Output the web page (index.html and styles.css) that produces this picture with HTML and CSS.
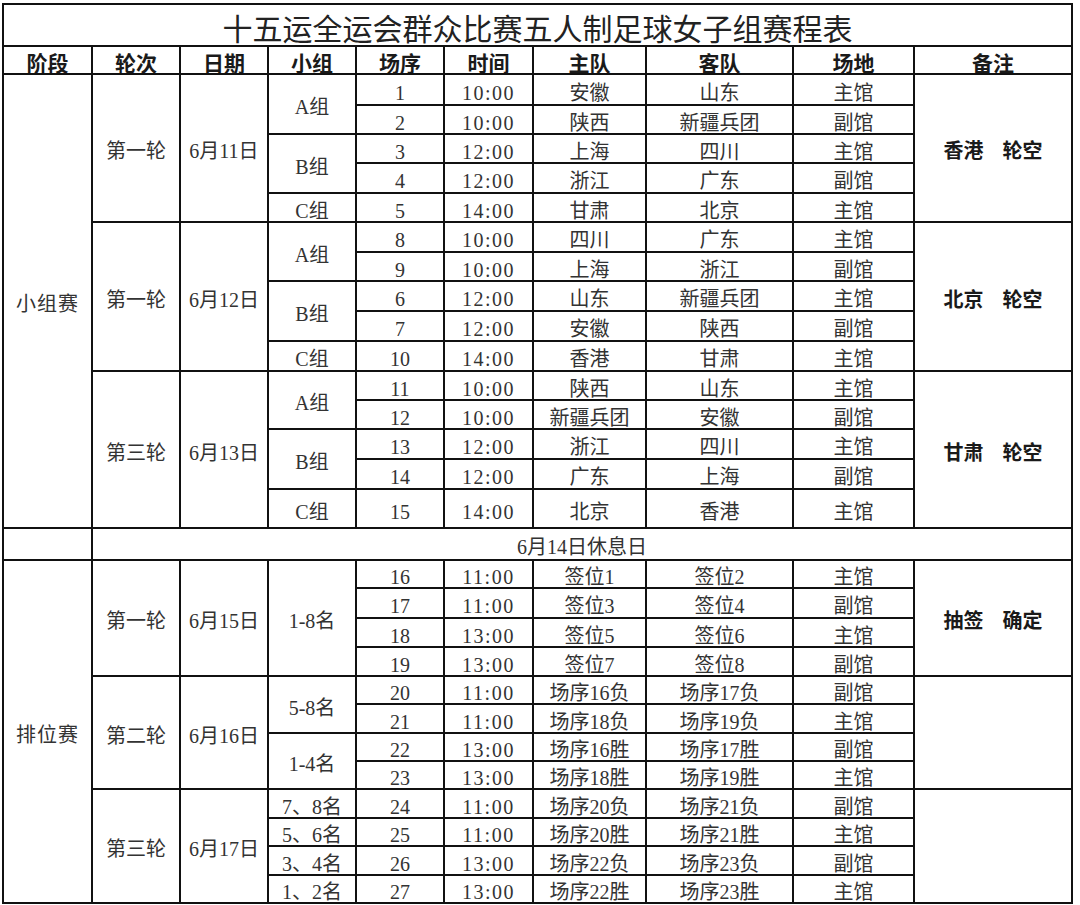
FILE: index.html
```html
<!DOCTYPE html>
<html lang="zh-CN">
<head>
<meta charset="utf-8">
<title>十五运全运会群众比赛五人制足球女子组赛程表</title>
<link rel="stylesheet" href="styles.css">
</head>
<body>
<table class="sheet">
  <colgroup>
    <col class="c1"><col class="c2"><col class="c3"><col class="c4"><col class="c5">
    <col class="c6"><col class="c7"><col class="c8"><col class="c9"><col class="c10">
  </colgroup>
  <thead>
    <tr class="h-title"><th colspan="10" class="title">十五运全运会群众比赛五人制足球女子组赛程表</th></tr>
    <tr class="h-head">
      <th>阶段</th><th>轮次</th><th>日期</th><th>小组</th><th>场序</th><th>时间</th><th>主队</th><th>客队</th><th>场地</th><th>备注</th>
    </tr>
  </thead>
  <tbody>
    <tr class="r31">
      <td rowspan="15" class="stage">小组赛</td>
      <td rowspan="5">第一轮</td><td rowspan="5">6月11日</td>
      <td rowspan="2">A组</td><td>1</td><td class="time">10:00</td><td>安徽</td><td>山东</td><td>主馆</td>
      <td rowspan="5" class="note">香港 轮空</td>
    </tr>
    <tr class="r29"><td>2</td><td class="time">10:00</td><td>陕西</td><td>新疆兵团</td><td>副馆</td></tr>
    <tr class="r29"><td rowspan="2">B组</td><td>3</td><td class="time">12:00</td><td>上海</td><td>四川</td><td>主馆</td></tr>
    <tr class="r30"><td>4</td><td class="time">12:00</td><td>浙江</td><td>广东</td><td>副馆</td></tr>
    <tr class="r29"><td>C组</td><td>5</td><td class="time">14:00</td><td>甘肃</td><td>北京</td><td>主馆</td></tr>

    <tr class="r30">
      <td rowspan="5">第一轮</td><td rowspan="5">6月12日</td>
      <td rowspan="2">A组</td><td>8</td><td class="time">10:00</td><td>四川</td><td>广东</td><td>主馆</td>
      <td rowspan="5" class="note">北京 轮空</td>
    </tr>
    <tr class="r29"><td>9</td><td class="time">10:00</td><td>上海</td><td>浙江</td><td>副馆</td></tr>
    <tr class="r30"><td rowspan="2">B组</td><td>6</td><td class="time">12:00</td><td>山东</td><td>新疆兵团</td><td>主馆</td></tr>
    <tr class="r30"><td>7</td><td class="time">12:00</td><td>安徽</td><td>陕西</td><td>副馆</td></tr>
    <tr class="r30"><td>C组</td><td>10</td><td class="time">14:00</td><td>香港</td><td>甘肃</td><td>主馆</td></tr>

    <tr class="r29">
      <td rowspan="5">第三轮</td><td rowspan="5">6月13日</td>
      <td rowspan="2">A组</td><td>11</td><td class="time">10:00</td><td>陕西</td><td>山东</td><td>主馆</td>
      <td rowspan="5" class="note">甘肃 轮空</td>
    </tr>
    <tr class="r29"><td>12</td><td class="time">10:00</td><td>新疆兵团</td><td>安徽</td><td>副馆</td></tr>
    <tr class="r30"><td rowspan="2">B组</td><td>13</td><td class="time">12:00</td><td>浙江</td><td>四川</td><td>主馆</td></tr>
    <tr class="r30"><td>14</td><td class="time">12:00</td><td>广东</td><td>上海</td><td>副馆</td></tr>
    <tr class="r39"><td>C组</td><td>15</td><td class="time">14:00</td><td>北京</td><td>香港</td><td>主馆</td></tr>

    <tr class="r32"><td></td><td colspan="9" class="rest">6月14日休息日</td></tr>

    <tr class="r28">
      <td rowspan="12" class="stage">排位赛</td>
      <td rowspan="4">第一轮</td><td rowspan="4">6月15日</td>
      <td rowspan="4">1-8名</td><td>16</td><td class="time">11:00</td><td>签位1</td><td>签位2</td><td>主馆</td>
      <td rowspan="4" class="note">抽签 确定</td>
    </tr>
    <tr class="r30"><td>17</td><td class="time">11:00</td><td>签位3</td><td>签位4</td><td>副馆</td></tr>
    <tr class="r29"><td>18</td><td class="time">13:00</td><td>签位5</td><td>签位6</td><td>主馆</td></tr>
    <tr class="r29"><td>19</td><td class="time">13:00</td><td>签位7</td><td>签位8</td><td>副馆</td></tr>

    <tr class="r28">
      <td rowspan="4">第二轮</td><td rowspan="4">6月16日</td>
      <td rowspan="2">5-8名</td><td>20</td><td class="time">11:00</td><td>场序16负</td><td>场序17负</td><td>副馆</td>
      <td rowspan="4" class="note"></td>
    </tr>
    <tr class="r29"><td>21</td><td class="time">11:00</td><td>场序18负</td><td>场序19负</td><td>主馆</td></tr>
    <tr class="r28"><td rowspan="2">1-4名</td><td>22</td><td class="time">13:00</td><td>场序16胜</td><td>场序17胜</td><td>副馆</td></tr>
    <tr class="r28"><td>23</td><td class="time">13:00</td><td>场序18胜</td><td>场序19胜</td><td>主馆</td></tr>

    <tr class="r29">
      <td rowspan="4">第三轮</td><td rowspan="4">6月17日</td>
      <td>7、8名</td><td>24</td><td class="time">11:00</td><td>场序20负</td><td>场序21负</td><td>副馆</td>
      <td rowspan="4" class="note"></td>
    </tr>
    <tr class="r28"><td>5、6名</td><td>25</td><td class="time">11:00</td><td>场序20胜</td><td>场序21胜</td><td>主馆</td></tr>
    <tr class="r29"><td>3、4名</td><td>26</td><td class="time">13:00</td><td>场序22负</td><td>场序23负</td><td>副馆</td></tr>
    <tr class="r28"><td>1、2名</td><td>27</td><td class="time">13:00</td><td>场序22胜</td><td>场序23胜</td><td>主馆</td></tr>
  </tbody>
</table>
</body>
</html>
```
FILE: styles.css
```css
html, body {
  margin: 0;
  padding: 0;
  background: #ffffff;
}

body {
  padding: 3px 0 0 2px;
}

.sheet {
  border-collapse: collapse;
  table-layout: fixed;
  width: 1071px;
  font-family: "Liberation Serif", "Noto Sans CJK SC", serif;
  font-size: 20px;
  color: #333333;
}

.c1 { width: 89px; }
.c2 { width: 88px; }
.c3 { width: 88px; }
.c4 { width: 88px; }
.c5 { width: 88px; }
.c6 { width: 89px; }
.c7 { width: 113px; }
.c8 { width: 147px; }
.c9 { width: 121px; }
.c10 { width: 158px; }

.sheet th,
.sheet td {
  border: 2px solid #111111;
  padding: 6px 0 0 0;
  text-align: center;
  vertical-align: middle;
  line-height: 16px;
  white-space: nowrap;
  overflow: hidden;
}

.sheet th {
  font-weight: 700;
  font-size: 21px;
  color: #1a1a1a;
  padding-top: 7px;
}

.h-title { height: 42px; }
.h-head { height: 28px; }

.sheet .title {
  font-weight: 400;
  font-size: 30px;
  line-height: 24px;
  color: #222222;
  padding-top: 9px;
}

.r28 { height: 28px; }
.r29 { height: 29px; }
.r30 { height: 30px; }
.r31 { height: 31px; }
.r32 { height: 32px; }
.r39 { height: 39px; }

.time {
  letter-spacing: 1.5px;
}

.stage {
  letter-spacing: 1px;
}

.note {
  font-weight: 700;
  color: #1a1a1a;
  word-spacing: 14px;
}

.sheet .rest {
  color: #333333;
  padding-top: 5px;
}
```
